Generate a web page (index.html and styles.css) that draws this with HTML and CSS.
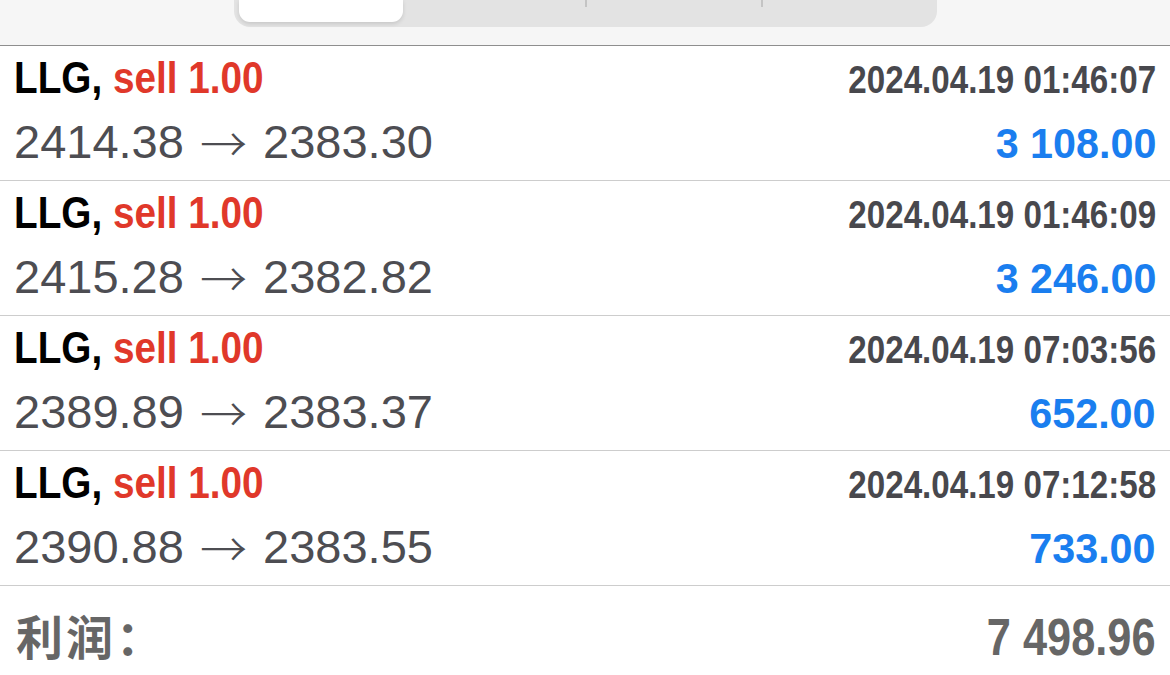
FILE: index.html
```html
<!doctype html>
<html>
<head>
<meta charset="utf-8">
<meta name="viewport" content="width=device-width, initial-scale=1.0">
<link rel="stylesheet" href="styles.css">
<title>历史</title>
</head>
<body>
<div class="topbar">
    <div class="segments">
        <div class="seg seg-active"></div>
        <div class="seg"></div>
        <div class="seg seg-div"></div>
        <div class="seg seg-div"></div>
    </div>
</div>

<ul class="deals">
    <li class="deal">
        <div class="line line-top">
            <span class="title">LLG, <span class="sell">sell 1.00</span></span>
            <span class="date">2024.04.19 01:46:07</span>
        </div>
        <div class="line line-bottom">
            <span class="prices">2414.38 <span class="arrow">→</span> 2383.30</span>
            <span class="profit">3 108.00</span>
        </div>
    </li>
    <li class="deal">
        <div class="line line-top">
            <span class="title">LLG, <span class="sell">sell 1.00</span></span>
            <span class="date">2024.04.19 01:46:09</span>
        </div>
        <div class="line line-bottom">
            <span class="prices">2415.28 <span class="arrow">→</span> 2382.82</span>
            <span class="profit">3 246.00</span>
        </div>
    </li>
    <li class="deal">
        <div class="line line-top">
            <span class="title">LLG, <span class="sell">sell 1.00</span></span>
            <span class="date">2024.04.19 07:03:56</span>
        </div>
        <div class="line line-bottom">
            <span class="prices">2389.89 <span class="arrow">→</span> 2383.37</span>
            <span class="profit">652.00</span>
        </div>
    </li>
    <li class="deal">
        <div class="line line-top">
            <span class="title">LLG, <span class="sell">sell 1.00</span></span>
            <span class="date">2024.04.19 07:12:58</span>
        </div>
        <div class="line line-bottom">
            <span class="prices">2390.88 <span class="arrow">→</span> 2383.55</span>
            <span class="profit">733.00</span>
        </div>
    </li>
</ul>

<div class="total">
    <span class="total-label">利润：</span>
    <span class="total-value">7 498.96</span>
</div>
</body>
</html>
```

FILE: styles.css
```css
* {
    box-sizing: border-box;
}
body {
    margin: 0;
    font-family: "Liberation Sans", Arial, "Noto Sans CJK SC", sans-serif;
    background-color: white;
    color: #4d4d52;
}

/* segmented control, cut off at the top */
.topbar {
    height: 46px;
    background-color: #f6f6f6;
    border-bottom: 1px solid #8e8e8e;
}
.segments {
    width: 703px;
    height: 27px;
    margin: 0 auto;
    display: grid;
    grid-template-columns: repeat(4, 1fr);
    background-color: #e3e3e3;
    border-radius: 0 0 16px 16px;
}
.seg-active {
    height: 22px;
    margin: 0 6px 0 5px;
    background-color: white;
    border-radius: 0 0 11px 11px;
    box-shadow: 0 2px 4px rgba(0, 0, 0, 0.12);
}
.seg-div {
    border-left: 2px solid #c4c4c4;
    height: 7px;
}

.deals {
    list-style: none;
    margin: 0;
    padding: 0;
}
.deal {
    height: 135px;
    padding: 0 14px 0 14px;
    border-bottom: 1px solid #cdcdcd;
}
.line {
    display: flex;
    justify-content: space-between;
    align-items: baseline;
}
.line-top {
    height: 64px;
    line-height: 64px;
}
.line-bottom {
    line-height: 63px;
}

.title {
    display: inline-block;
    font-size: 44px;
    font-weight: bold;
    color: #000;
    transform: scaleX(0.88);
    transform-origin: left;
    white-space: pre;
}
.sell {
    color: #e0382a;
}
.date {
    display: inline-block;
    font-size: 39px;
    font-weight: bold;
    color: #48484d;
    transform: scaleX(0.85);
    transform-origin: right;
}
.prices {
    font-size: 47px;
    color: #4d4d52;
}
.arrow {
    font-family: "Noto Sans CJK SC", sans-serif;
    font-weight: 300;
    line-height: 1;
    vertical-align: -4px;
    margin: 0 3px;
}
.profit {
    display: inline-block;
    font-size: 43px;
    font-weight: bold;
    color: #1a7eef;
    transform: scaleX(0.96);
    transform-origin: right;
}

.total {
    display: flex;
    justify-content: space-between;
    align-items: baseline;
    padding: 19px 14px 0 16px;
    line-height: 60px;
    color: #666;
    font-weight: bold;
}
.total-label {
    font-family: "Noto Sans CJK SC", sans-serif;
    font-size: 47px;
    letter-spacing: 3px;
}
.total-value {
    display: inline-block;
    font-size: 51px;
    transform: scaleX(0.85);
    transform-origin: right;
}
```
